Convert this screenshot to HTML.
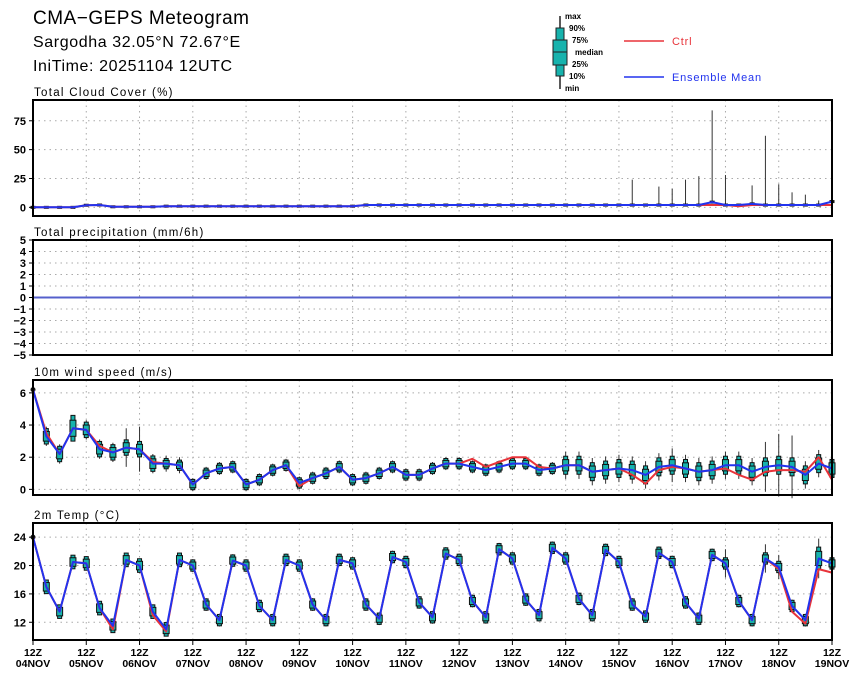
<!DOCTYPE html>
<html><head><meta charset="utf-8">
<style>
html,body{margin:0;padding:0;background:#fff;width:860px;height:677px;overflow:hidden}
svg{display:block}
text{font-family:"Liberation Sans","DejaVu Sans",sans-serif}
</style></head>
<body>
<svg id="s" width="860" height="677" xmlns="http://www.w3.org/2000/svg"></svg>
<script>
var S='';
function add(x){S+=x;}
var X0=33,X1=832,N=60;
function xi(i){return X0+i*(X1-X0)/N;}
add('<text x="33" y="24" font-size="19" letter-spacing="0.5">CMA−GEPS Meteogram</text>');
add('<text x="33" y="47" font-size="16" letter-spacing="0.6">Sargodha 32.05°N 72.67°E</text>');
add('<text x="33" y="71" font-size="16" letter-spacing="0.6">IniTime: 20251104 12UTC</text>');
add('<line x1="560" y1="16" x2="560" y2="89" stroke="#222" stroke-width="1.5"/>');
add('<rect x="556" y="28" width="8" height="48" fill="#17b3ad" stroke="#222"/>');
add('<rect x="553" y="40" width="14" height="25" fill="#17b3ad" stroke="#222"/>');
add('<line x1="553" y1="52" x2="567" y2="52" stroke="#222"/>');
var lg=[["max",565,19],["90%",569,31],["75%",572,43],["median",575,55],["25%",572,67],["10%",569,79],["min",565,91]];
lg.forEach(function(a){add('<text x="'+a[1]+'" y="'+a[2]+'" font-size="8" font-weight="bold">'+a[0]+'</text>');});
add('<line x1="624" y1="41" x2="664" y2="41" stroke="#e8333a" stroke-width="1.5"/>');
add('<text x="672" y="45" font-size="11" fill="#e8333a" letter-spacing="0.8">Ctrl</text>');
add('<line x1="624" y1="77" x2="664" y2="77" stroke="#2233ee" stroke-width="1.5"/>');
add('<text x="672" y="81" font-size="11" fill="#2233ee" letter-spacing="0.8">Ensemble Mean</text>');

function panel(top,bot,title,ymin,ymax,ticks,gridv){
  add('<text x="34" y="'+(top-4)+'" font-size="11.5" letter-spacing="1.3">'+title+'</text>');
  var f=function(v){return bot-(v-ymin)/(ymax-ymin)*(bot-top);};
  for(var d=1;d<15;d++){var x=X0+d*(X1-X0)/15;add('<line x1="'+x+'" y1="'+top+'" x2="'+x+'" y2="'+bot+'" stroke="#aaa" stroke-dasharray="1.5,4"/>');}
  gridv.forEach(function(v){var y=f(v);add('<line x1="'+X0+'" y1="'+y+'" x2="'+X1+'" y2="'+y+'" stroke="#aaa" stroke-dasharray="1.5,4"/>');});
  ticks.forEach(function(v){var y=f(v);add('<line x1="'+(X0-4)+'" y1="'+y+'" x2="'+X0+'" y2="'+y+'" stroke="#000"/>');
    add('<text x="'+(X0-7)+'" y="'+(y+4)+'" font-size="11" font-weight="bold" text-anchor="end">'+String(v).replace('-','−')+'</text>');});
  return f;
}
function frame(top,bot){add('<rect x="'+X0+'" y="'+top+'" width="'+(X1-X0)+'" height="'+(bot-top)+'" fill="none" stroke="#000" stroke-width="2"/>');}
function boxes(f,mean,sp,whisk){
  for(var i=0;i<=N;i++){var x=xi(i),m=mean[i],s=sp[i],w=whisk[i];
    add('<line x1="'+x+'" y1="'+f(m-s-w)+'" x2="'+x+'" y2="'+f(m+s+w)+'" stroke="#333" stroke-width="1"/>');
    if(s>0.001){add('<rect x="'+(x-2)+'" y="'+f(m+s*1.6)+'" width="4" height="'+(f(m-s*1.6)-f(m+s*1.6))+'" fill="#17b3ad" stroke="#111" stroke-width="1"/>');
    add('<rect x="'+(x-3)+'" y="'+f(m+s)+'" width="6" height="'+Math.max(2,f(m-s)-f(m+s))+'" fill="#17b3ad" stroke="#111" stroke-width="1"/>');}
    else add('<circle cx="'+x+'" cy="'+f(m)+'" r="2.5" fill="#111"/>');
  }
}
function line(f,arr,c){var p=arr.map(function(v,i){return (i?'L':'M')+xi(i).toFixed(1)+','+f(v).toFixed(1);}).join('');
  add('<path d="'+p+'" fill="none" stroke="'+c+'" stroke-width="2" stroke-linejoin="round"/>');}

var f1=panel(100,216,"Total Cloud Cover (%)",-7.5,93,[0,25,50,75],[0,25,50,75]);
var cm=[],cc=[],cw=[];
for(var i=0;i<=N;i++){var v=i<4?0:(i<6?1+i*0.2:(i<10?0.5:(i<25?1:2)));cm.push(v);cc.push(v);cw.push(0.3);}
var spikes={45:24,47:18,48:16,49:24,50:27,51:84,52:28,54:19,55:62,56:20,57:13,58:11,59:6};
cm[51]=4.5;cm[54]=3;cm[60]=5;cc[51]=2;cc[53]=1;
for(var k in spikes){cw[k]=spikes[k]-cm[k];}
for(var i=0;i<=N;i++){var x=xi(i);add('<line x1="'+x+'" y1="'+f1(cm[i])+'" x2="'+x+'" y2="'+f1(cm[i]+cw[i])+'" stroke="#333"/>');add('<rect x="'+(x-2.5)+'" y="'+(f1(cm[i])-1.5)+'" width="5" height="3" fill="#111"/>');}
line(f1,cc,"#e8333a");line(f1,cm,"#2233ee");frame(100,216);

var f2=panel(240,355,"Total precipitation (mm/6h)",-5,5,[5,4,3,2,1,0,-1,-2,-3,-4,-5],[4,3,2,1,-1,-2,-3,-4]);
add('<line x1="'+X0+'" y1="'+f2(0)+'" x2="'+X1+'" y2="'+f2(0)+'" stroke="#5560cc" stroke-width="2"/>');
frame(240,355);

var f3=panel(380,495,"10m wind speed (m/s)",-0.35,6.8,[0,2,4,6],[0,2,4,6]);
var wm=[6.2,3.3,2.2,3.8,3.7,2.5,2.3,2.6,2.5,1.6,1.6,1.5,0.3,1.0,1.3,1.4,0.3,0.6,1.2,1.5,0.4,0.7,1.0,1.4,0.6,0.7,1.0,1.4,0.9,0.9,1.3,1.6,1.6,1.4,1.2,1.4,1.6,1.6,1.2,1.3,1.5,1.5,1.1,1.2,1.3,1.2,0.9,1.4,1.5,1.3,1.1,1.2,1.5,1.5,1.1,1.4,1.5,1.4,0.9,1.6,1.3];
var wc=wm.slice();wc[1]=3.5;wc[5]=2.7;wc[9]=1.7;wc[20]=0.2;wc[33]=1.9;wc[34]=1.4;wc[35]=1.7;wc[36]=2.0;wc[37]=2.0;wc[38]=1.4;wc[45]=0.9;wc[46]=0.35;wc[47]=1.2;wc[48]=1.4;wc[52]=1.3;wc[53]=0.9;wc[54]=0.6;wc[55]=1.1;wc[56]=1.2;wc[57]=1.2;wc[58]=1.1;wc[59]=2.0;wc[60]=0.6;
var ws=[],ww=[];for(var i=0;i<=N;i++){ws.push(i==0?0:(i<10?0.3:(i<40?0.2:0.35)));ww.push(i<12?0.3:(i<40?0.2:0.5));}
ww[7]=0.9;ww[8]=1.1;ws[3]=0.5;ww[55]=1.2;ww[56]=1.6;ww[57]=1.6;ww[48]=0.7;
boxes(f3,wm,ws,ww);line(f3,wc,"#e8333a");line(f3,wm,"#2233ee");frame(380,495);

var f4=panel(523,640,"2m Temp (°C)",9.5,26,[12,16,20,24],[12,16,20,24]);
var days=[[20.5,20.3,14,11.5],[20.8,20,13.5,11],[20.8,20,14.5,12.3],[20.7,20,14.3,12.3],[20.8,20,14.5,12.3],[20.8,20.3,14.5,12.5],[21.2,20.5,14.8,12.7],[21.7,20.8,15,12.7],[22.3,21,15.2,13],[22.5,21,15.3,13],[22.2,20.5,14.5,12.8],[21.8,20.5,14.8,12.5],[21.5,20.3,15,12.3],[21,19.8,14.3,12.3]];
var tm=[24,17,13.5];days.forEach(function(d){tm=tm.concat(d);});tm.push(21);tm.push(20.3);tm=tm.slice(0,61);
var tc=tm.slice();tc[6]=11;tc[10]=10.7;tc[9]=13;tc[57]=13.5;tc[58]=11.8;tc[59]=19.5;tc[60]=19;tc[56]=19.5;
var ts=[],tw=[];for(var i=0;i<=N;i++){ts.push(i==0?0:(i<12?0.6:0.5));tw.push(0.4);}
tw[52]=1.5;tw[55]=1.5;tw[59]=1.8;tw[56]=1.2;ts[59]=1;
boxes(f4,tm,ts,tw);line(f4,tc,"#e8333a");line(f4,tm,"#2233ee");frame(523,640);
var dl=["04","05","06","07","08","09","10","11","12","13","14","15","16","17","18","19"];
for(var d=0;d<16;d++){var x=X0+d*(X1-X0)/15;add('<line x1="'+x+'" y1="640" x2="'+x+'" y2="645" stroke="#000"/>');
add('<text x="'+x+'" y="656" font-size="10.5" font-weight="bold" text-anchor="middle">12Z</text>');
add('<text x="'+x+'" y="667" font-size="10.5" font-weight="bold" text-anchor="middle">'+dl[d]+'NOV</text>');}
document.getElementById('s').innerHTML=S;
</script>
</body></html>
